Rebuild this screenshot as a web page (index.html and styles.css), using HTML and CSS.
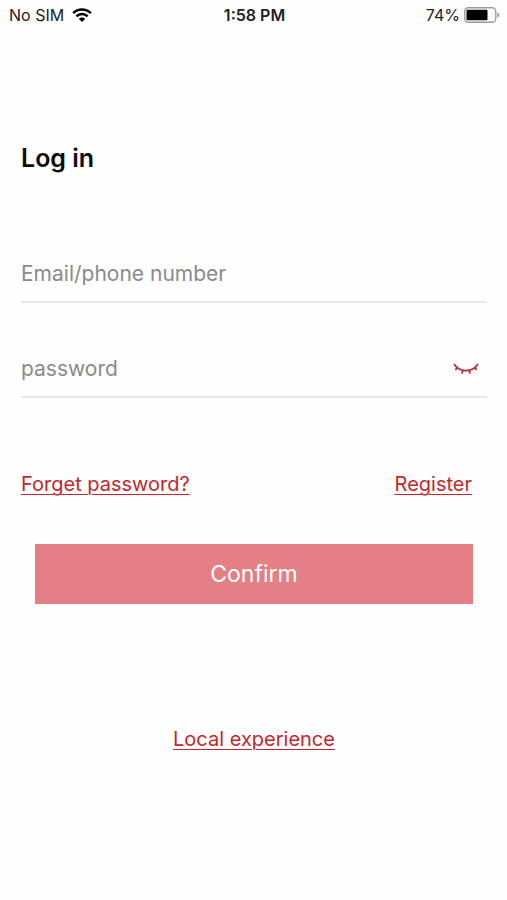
FILE: index.html
```html
<!DOCTYPE html>
<html lang="en">
<head>
<meta charset="utf-8">
<meta name="viewport" content="width=device-width, initial-scale=1">
<title>Log in</title>
<link rel="stylesheet" href="styles.css">
</head>
<body>
<header class="status">
  <div class="status-left">
    <span>No SIM</span>
    <svg class="wifi" viewBox="0 0 20 14" aria-hidden="true">
      <path d="M1.2 5.2a12.6 12.6 0 0 1 17.6 0M4.4 8.4a8 8 0 0 1 11.2 0" fill="none" stroke="currentColor" stroke-width="2.5"/>
      <path d="M6.8 10.8a4.6 4.6 0 0 1 6.4 0L10 14z" fill="currentColor"/>
    </svg>
  </div>
  <time class="clock">1:58 PM</time>
  <div class="status-right">
    <span>74%</span>
    <svg class="battery" viewBox="0 0 36 16" aria-hidden="true">
      <rect x="0.75" y="0.75" width="31" height="14.5" rx="3.5" fill="none" stroke="#9a9a9a" stroke-width="1.3"/>
      <rect x="2.5" y="2.8" width="21" height="10.4" rx="1" fill="#000"/>
      <path d="M33.4 5.5c2.4.8 2.4 4.2 0 5z" fill="#8c8c8c"/>
    </svg>
  </div>
</header>
<main class="login">
  <h1 class="title">Log in</h1>
  <form class="form">
    <div class="field">
      <input class="input" type="text" placeholder="Email/phone number" aria-label="Email/phone number">
    </div>
    <div class="field">
      <input class="input" type="password" placeholder="password" aria-label="password">
      <button class="reveal" type="button" aria-label="Show password">
        <svg class="eye" viewBox="0 0 26 12" aria-hidden="true">
          <path d="M1 1C4 5.6 8.4 7.6 13 7.6S22 5.6 25 1M4 4.2 2.6 7.2M9.6 7.2 9 10.6M16.4 7.2l.6 3.4M22 4.2 23.4 7.2" fill="none" stroke="currentColor" stroke-width="1.8"/>
        </svg>
      </button>
    </div>
    <div class="links">
      <a class="link" href="#forget">Forget password?</a>
      <a class="link" href="#register">Register</a>
    </div>
    <button class="confirm" type="submit">Confirm</button>
  </form>
  <a class="link local" href="#local">Local experience</a>
</main>
</body>
</html>
```
FILE: styles.css
```css
* {
  box-sizing: border-box;
}

body {
  margin: 0;
  min-height: 100vh;
  background: #fefefe;
  color: #0a0a0a;
  font-family: Inter, "Liberation Sans", sans-serif;
}

.status {
  display: grid;
  grid-template-columns: 1fr auto 1fr;
  align-items: center;
  height: 30px;
  padding: 0 7px 0 9px;
  font-size: 16px;
  line-height: 20px;
  color: #222;
}

.status-left,
.status-right {
  display: flex;
  align-items: center;
}

.status-left {
  gap: 8px;
}

.status-right {
  justify-content: flex-end;
  gap: 4px;
}

.clock {
  font-weight: 600;
}

.wifi {
  width: 20px;
  height: 14px;
  color: #000;
}

.battery {
  width: 36px;
  height: 16px;
}

.login {
  display: flex;
  flex-direction: column;
  padding: 112px 20px 40px 21px;
}

.title {
  margin: 0;
  font-size: 25px;
  font-weight: 600;
  line-height: 32px;
}

.form {
  display: flex;
  flex-direction: column;
  margin-top: 72px;
}

.field {
  display: flex;
  align-items: center;
  height: 57px;
  border-bottom: 2px solid #e8e8e8;
}

.field + .field {
  margin-top: 38px;
}

.input {
  flex: 1;
  min-width: 0;
  height: 56px;
  padding: 0;
  border: 0;
  outline: 0;
  background: transparent;
  color: #222;
  font: inherit;
  font-size: 21px;
}

.input::placeholder {
  color: #8a8a8a;
  opacity: 1;
}

.reveal {
  display: flex;
  padding: 8px;
  border: 0;
  background: none;
  color: #b8303c;
}

.eye {
  width: 26px;
  height: 12px;
}

.links {
  display: flex;
  justify-content: space-between;
  margin: 70px 15px 0 0;
}

.link {
  color: #c4262c;
  font-size: 20px;
  line-height: 32px;
  text-decoration-thickness: 1px;
  text-underline-offset: 3px;
}

.confirm {
  height: 60px;
  margin: 44px 14px 0;
  border: 0;
  background: #e37f85;
  color: #fff;
  font: inherit;
  font-size: 23px;
}

.local {
  align-self: center;
  margin-top: 119px;
}
```
